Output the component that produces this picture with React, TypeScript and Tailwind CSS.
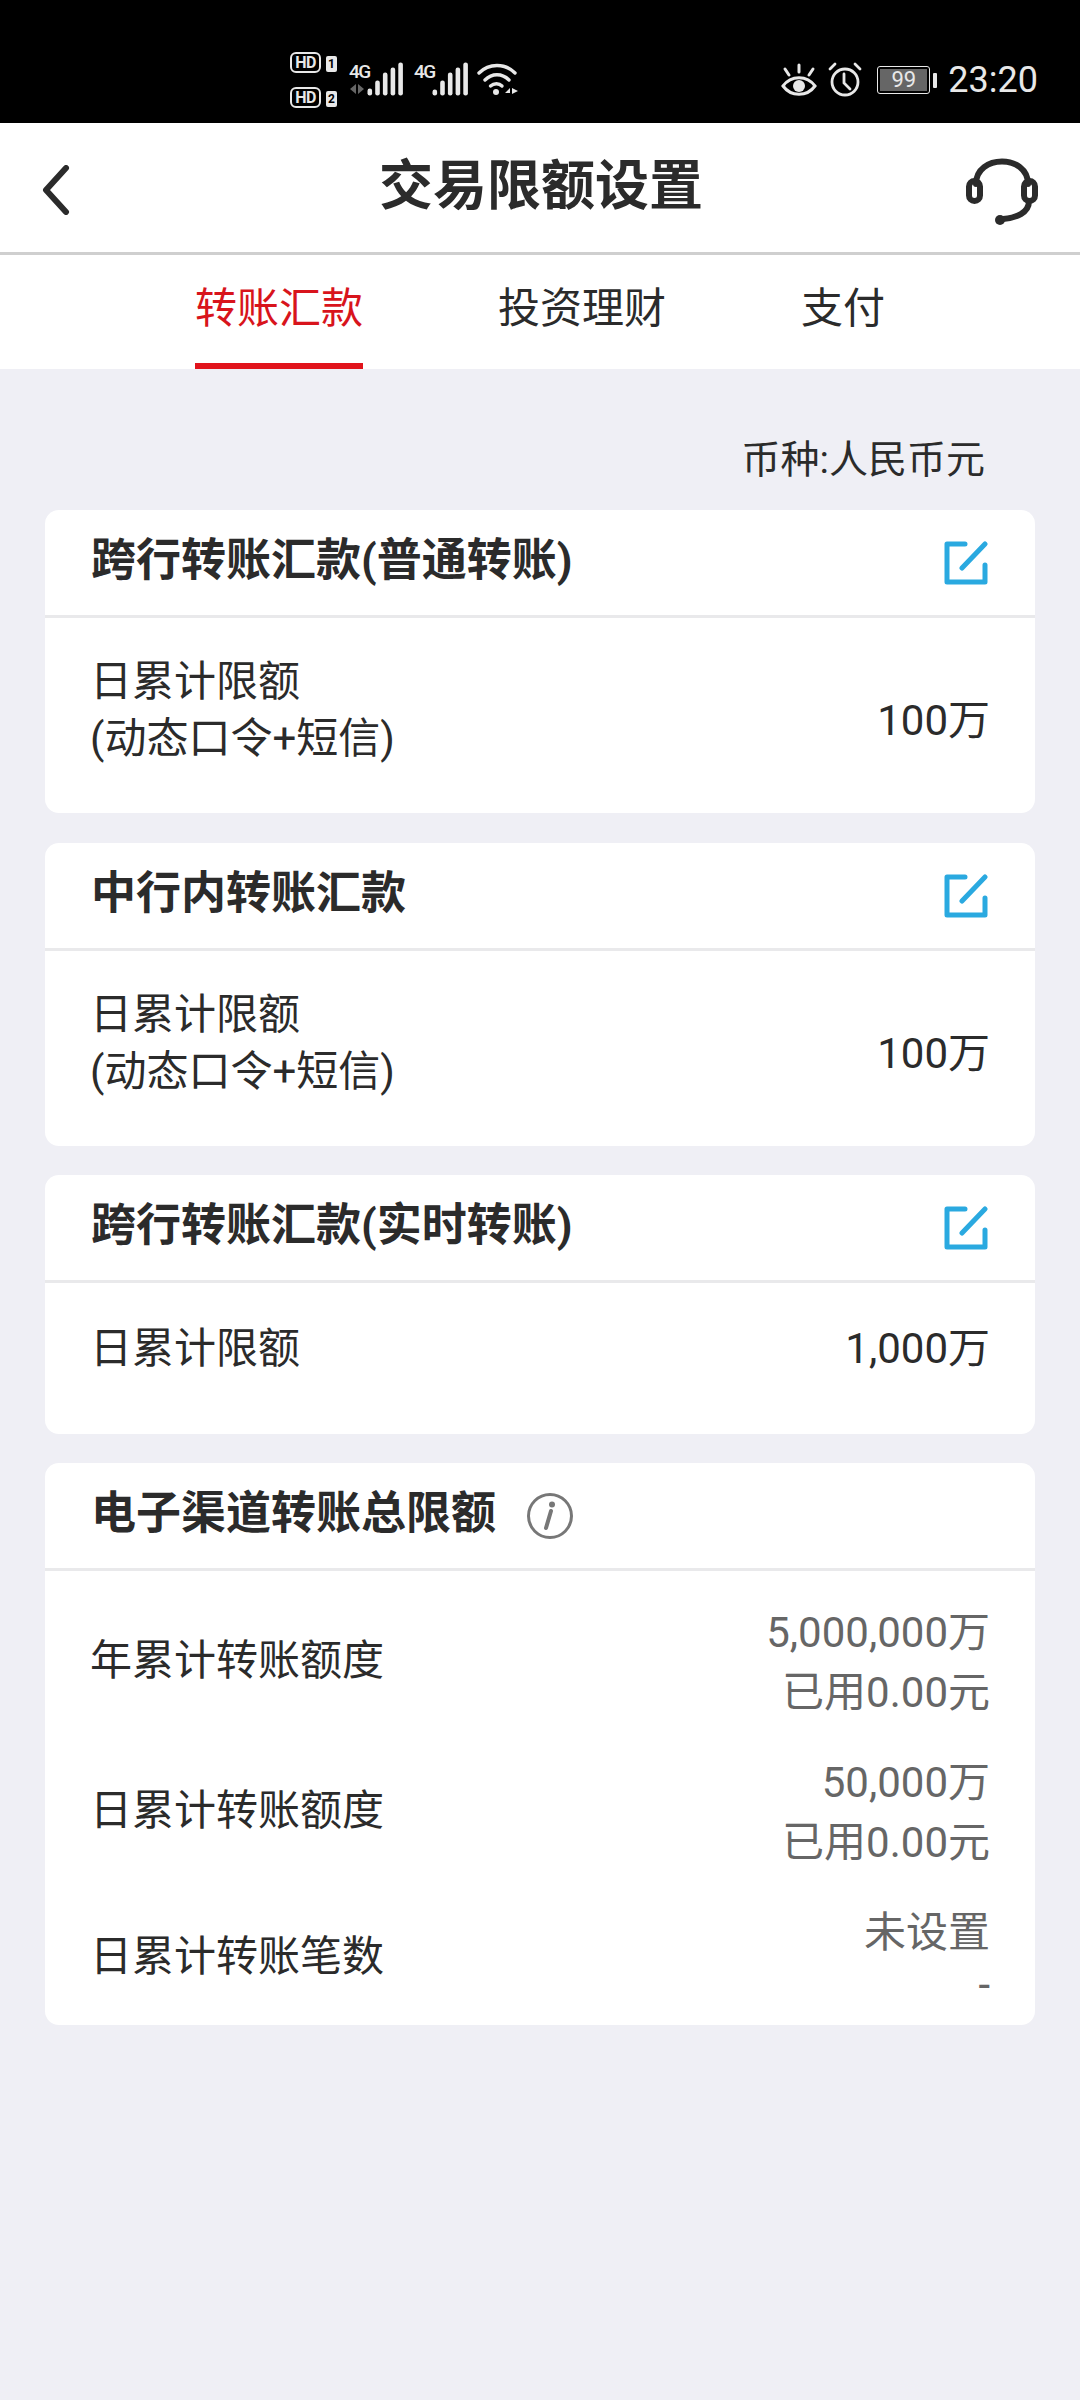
const font = "font-['Roboto','Noto_Sans_CJK_SC',sans-serif]"

function Bars({ heights }: { heights: number[] }) {
  return (
    <svg width="36" height="34" viewBox="0 0 36 34" className="block">
      {heights.map((h, i) => (
        <rect key={i} x={0.5 + i * 7.7} y={33.5 - h} width="4.6" height={h} rx="2.2" fill="#e8e8e8" />
      ))}
    </svg>
  )
}

function HdBadge({ n }: { n: string }) {
  return (
    <div className="flex items-center gap-[5px]">
      <div className="flex h-[21px] w-[31px] items-center justify-center rounded-[6px] border-[2.5px] border-[#e8e8e8] text-[16px] leading-none font-bold tracking-[-0.5px] text-[#e8e8e8]">
        HD
      </div>
      <div className="mt-[3px] flex h-[16px] w-[11px] items-center justify-center rounded-[2px] bg-[#e8e8e8] text-[12px] leading-none font-bold text-black">
        {n}
      </div>
    </div>
  )
}

function StatusBar() {
  return (
    <div className="flex h-[123px] items-start justify-between bg-black pr-[42px] pl-[290px]">
      <div className="flex items-start">
        <div className="mt-[52px] flex flex-col gap-[14px]">
          <HdBadge n="1" />
          <HdBadge n="2" />
        </div>
        <div className="mt-[62px] ml-[12px] flex items-start">
          <div className="flex w-[18px] flex-col">
            <span className="text-[19px] leading-[19px] font-medium tracking-[-1.5px] text-[#e8e8e8]">4G</span>
            <svg width="16" height="10" viewBox="0 0 16 10" className="mt-[3px] block" fill="#666">
              <path d="M7 0V10L1 5ZM9 0L15 5L9 10Z" />
            </svg>
          </div>
          <Bars heights={[7, 15, 23, 28, 33]} />
          <div className="ml-[11px] w-[18px] text-[19px] leading-[19px] font-medium tracking-[-1.5px] text-[#e8e8e8]">4G</div>
          <Bars heights={[6, 15, 23, 28, 33]} />
          <svg width="42" height="34" viewBox="0 0 42 34" className="ml-[9px] block" fill="none" stroke="#e8e8e8" strokeWidth="3.4" strokeLinecap="round">
            <path d="M2 11C12 1 28 1 38 11" />
            <path d="M8 18C15 11 25 11 32 18" />
            <path d="M13.500 24C17 21 22 21 25 24" />
            <circle cx="19" cy="30" r="3" fill="#e8e8e8" stroke="none" />
            <path d="M28 31L33 26V31ZM35 26L41 29L35 32Z" fill="#e8e8e8" stroke="none" />
          </svg>
        </div>
      </div>
      <div className="mt-[62px] flex items-center">
        <svg width="36" height="36" viewBox="0 0 36 36" className="block" fill="none" stroke="#e8e8e8" strokeWidth="3" strokeLinecap="round">
          <path d="M2 24C10 13 26 13 34 24C26 35 10 35 2 24Z" />
          <circle cx="18" cy="24" r="6" fill="#e8e8e8" stroke="none" />
          <path d="M18 3V10M4 7L8 13M32 7L28 13" />
        </svg>
        <svg width="34" height="36" viewBox="0 0 34 36" className="ml-[11px] block" fill="none" stroke="#e8e8e8" strokeWidth="2.800" strokeLinecap="round">
          <circle cx="17" cy="20" r="13" />
          <path d="M16 12V21L22 27M2 7L7 2M32 7L27 2" />
        </svg>
        <div className="ml-[15px] flex items-center">
          <div className="flex h-[28px] w-[53px] items-center justify-center rounded-[3px] border border-[#e8e8e8] p-[2px]">
            <div className="flex h-full w-full items-center justify-center bg-[#666] text-[22px] leading-none text-[#e8e8e8]">
              99
            </div>
          </div>
          <div className="ml-[3px] h-[15px] w-[4px] rounded-[1px] bg-[#e8e8e8]" />
        </div>
        <span className="ml-[11px] text-[36px] leading-none text-[#e8e8e8]">23:20</span>
      </div>
    </div>
  )
}

function NavBar() {
  return (
    <div className="flex h-[132px] items-center justify-between border-b-[3px] border-[#cfcfcf] bg-white pr-[42px] pl-[42px]">
      <svg width="28" height="50" viewBox="0 0 28 50" className="mt-[4px] block" fill="none" stroke="#2b2b2b" strokeWidth="6" strokeLinecap="round" strokeLinejoin="round">
        <path d="M24 3L4 25L24 47" />
      </svg>
      <h1 className="mb-[2px] ml-[46px] text-[54px] leading-none font-bold text-[#2b2b2b]">交易限额设置</h1>
      <svg width="72" height="68" viewBox="0 0 72 68" className="mt-[8px] block" fill="none" stroke="#2b2b2b" strokeWidth="6" strokeLinecap="round">
        <path d="M10 26C10 -4 62 -4 62 26" />
        <rect x="3" y="23" width="11" height="20" rx="5.500" />
        <rect x="58" y="23" width="11" height="20" rx="5.500" />
        <path d="M63 43C63 55 50 60 37 61" />
        <circle cx="34" cy="62" r="5" fill="#2b2b2b" stroke="none" />
      </svg>
    </div>
  )
}

function Tabs() {
  return (
    <div className="flex h-[114px] gap-[135px] bg-white pl-[195px]">
      <div className="flex h-full w-[168px] items-center justify-center border-b-[6px] border-[#e1141c] text-[42px] leading-none text-[#d8141c]">
        转账汇款
      </div>
      <div className="flex h-full items-center pb-[6px] text-[42px] leading-none text-[#2b2b2b]">投资理财</div>
      <div className="flex h-full items-center pb-[6px] text-[42px] leading-none text-[#2b2b2b]">支付</div>
    </div>
  )
}

function EditIcon() {
  return (
    <svg width="44" height="44" viewBox="0 0 44 44" className="block" fill="none" stroke="#2aa9e0" strokeWidth="5" strokeLinecap="round" strokeLinejoin="round">
      <path d="M21 3H3V41H41V24" />
      <path d="M18 27L41 3" />
    </svg>
  )
}

function InfoIcon() {
  return (
    <svg width="46" height="46" viewBox="0 0 46 46" className="block">
      <circle cx="23" cy="23" r="21.500" fill="none" stroke="#777" strokeWidth="3" />
      <circle cx="25" cy="11.500" r="3" fill="#777" />
      <path d="M24 18L19 35" stroke="#777" strokeWidth="4" strokeLinecap="round" fill="none" />
    </svg>
  )
}

function Card({ title, icon, className, children }: { title: string; icon: React.ReactNode; className: string; children: React.ReactNode }) {
  return (
    <section className={`rounded-[14px] bg-white ${className}`}>
      <div className="flex h-[108px] items-center justify-between border-b-[3px] border-[#e9e9eb] pr-[47px] pl-[46px]">
        <h2 className="mb-[5px] text-[45px] leading-none font-bold text-[#2b2b2b]">{title}</h2>
        {icon}
      </div>
      {children}
    </section>
  )
}

function LimitRow({ value }: { value: string }) {
  return (
    <div className="flex h-[195px] items-center justify-between pr-[45px] pl-[45px] text-[#2b2b2b]">
      <div className="mb-[12px] text-[42px] leading-[57px]">
        <div>日累计限额</div>
        <div>(动态口令+短信)</div>
      </div>
      <span className="mt-[10px] text-[42px] leading-none">{value}</span>
    </div>
  )
}

function TotalRow({ label, top, bottom, className, lineClass, labelClass }: { label: string; top: string; bottom: string; className: string; lineClass: string; labelClass: string }) {
  return (
    <div className={`flex items-center justify-between ${className}`}>
      <span className={`text-[42px] leading-none text-[#2b2b2b] ${labelClass}`}>{label}</span>
      <div className={`text-right text-[42px] text-[#666] ${lineClass}`}>
        <div>{top}</div>
        <div>{bottom}</div>
      </div>
    </div>
  )
}

export default function App() {
  return (
    <div className={`flex min-h-[2400px] w-[1080px] flex-col bg-[#efeff5] ${font}`}>
      <StatusBar />
      <NavBar />
      <Tabs />
      <main className="flex flex-col px-[45px]">
        <div className="flex h-[141px] items-center justify-end pt-[42px] pr-[50px] text-[39px] leading-none text-[#2b2b2b]">
          币种:人民币元
        </div>
        <Card title="跨行转账汇款(普通转账)" icon={<EditIcon />} className="h-[303px]">
          <LimitRow value="100万" />
        </Card>
        <Card title="中行内转账汇款" icon={<EditIcon />} className="mt-[30px] h-[303px]">
          <LimitRow value="100万" />
        </Card>
        <Card title="跨行转账汇款(实时转账)" icon={<EditIcon />} className="mt-[29px] h-[259px]">
          <div className="flex h-[151px] items-center justify-between pr-[45px] pb-[19px] pl-[45px] text-[42px] leading-none text-[#2b2b2b]">
            <span>日累计限额</span>
            <span>1,000万</span>
          </div>
        </Card>
        <Card
          title="电子渠道转账总限额"
          icon={
            <div className="mr-[415px]">
              <InfoIcon />
            </div>
          }
          className="mt-[29px] h-[562px]"
        >
          <div className="flex flex-col pt-[32px] pr-[45px] pl-[45px]">
            <TotalRow label="年累计转账额度" top="5,000,000万" bottom="已用0.00元" className="" lineClass="leading-[60px]" labelClass="mb-[4px]" />
            <TotalRow label="日累计转账额度" top="50,000万" bottom="已用0.00元" className="mt-[30px]" lineClass="leading-[60px]" labelClass="mb-[4px]" />
            <TotalRow label="日累计转账笔数" top="未设置" bottom="-" className="mt-[34px]" lineClass="leading-[52px]" labelClass="mb-[4px]" />
          </div>
        </Card>
      </main>
    </div>
  )
}
